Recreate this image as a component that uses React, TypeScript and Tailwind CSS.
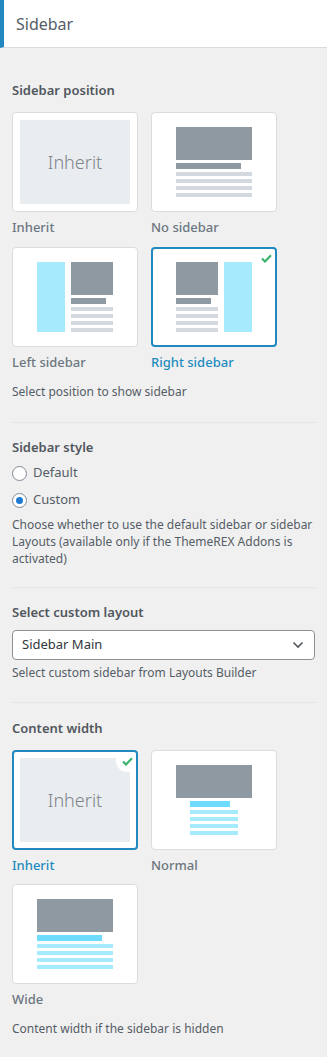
import { ReactNode } from 'react'

const font = { fontFamily: '"Noto Sans", "Open Sans", sans-serif' }

function Check() {
  return (
    <div className="absolute top-[-2px] right-[-2px] w-[22px] h-[22px] rounded-full bg-white flex items-center justify-center">
      <svg width="11" height="9" viewBox="0 0 11 9">
        <path d="M1 4.5 L4 7.5 L10 1.2" fill="none" stroke="#3cb46e" strokeWidth="2.2" />
      </svg>
    </div>
  )
}

interface CardProps {
  label: string
  selected?: boolean
  children: ReactNode
}

function Card({ label, selected, children }: CardProps) {
  return (
    <div className="flex flex-col">
      <div
        className={
          selected
            ? 'relative overflow-hidden w-[126px] h-[100px] bg-white rounded-[4px] border-2 border-[#2288c0] flex items-center justify-center'
            : 'relative overflow-hidden w-[126px] h-[100px] bg-white rounded-[4px] border border-[#dcdcde] flex items-center justify-center'
        }
      >
        {children}
        {selected && <Check />}
      </div>
      <div
        className={
          selected
            ? 'mt-[6px] text-[13px] leading-[18px] font-medium text-[#1e8cbe]'
            : 'mt-[6px] text-[13px] leading-[18px] font-medium text-[#6c7781]'
        }
      >
        {label}
      </div>
    </div>
  )
}

function InheritPreview() {
  return (
    <div className="w-[110px] h-[84px] bg-[#eaedf0] flex items-center justify-center text-[18px] font-light text-[#7d838b]">
      Inherit
    </div>
  )
}

function Lines({ w, color, count = 4 }: { w: number; color: string; count?: number }) {
  return (
    <div className="flex flex-col gap-[3px] mt-[3px]">
      {Array.from({ length: count }).map((_, i) => (
        <div key={i} className="h-[4px]" style={{ width: w, background: color }} />
      ))}
    </div>
  )
}

function NoSidebarPreview() {
  return (
    <div className="w-[76px] h-[70px] flex flex-col">
      <div className="w-[76px] h-[33px] bg-[#8f99a2]" />
      <div className="w-[65px] h-[6px] mt-[3px] bg-[#8f99a2]" />
      <Lines w={76} color="#d3d9de" />
    </div>
  )
}

function SidePreview({ side }: { side: 'left' | 'right' }) {
  const bar = <div className="w-[28px] h-[70px] bg-[#a5eafd]" />
  return (
    <div className="w-[76px] h-[70px] flex gap-[6px]">
      {side === 'left' && bar}
      <div className="flex flex-col w-[42px]">
        <div className="w-[42px] h-[33px] bg-[#8f99a2]" />
        <div className="w-[35px] h-[6px] mt-[3px] bg-[#8f99a2]" />
        <Lines w={42} color="#d3d9de" />
      </div>
      {side === 'right' && bar}
    </div>
  )
}

function WidthPreview({ wide }: { wide?: boolean }) {
  return (
    <div className="w-[76px] h-[70px] flex flex-col items-center">
      <div className="w-[76px] h-[33px] bg-[#8f99a2]" />
      <div className={wide ? 'w-[76px] flex flex-col' : 'w-[48px] flex flex-col'}>
        <div className={wide ? 'w-[65px] h-[6px] mt-[3px] bg-[#6fdcfd]' : 'w-[40px] h-[6px] mt-[3px] bg-[#6fdcfd]'} />
        <Lines w={wide ? 76 : 48} color="#a5eafd" />
      </div>
    </div>
  )
}

function Title({ children }: { children: ReactNode }) {
  return <div className="text-[13px] leading-[20px] font-semibold text-[#50575e]">{children}</div>
}

function Help({ children }: { children: ReactNode }) {
  return <div className="text-[12px] leading-[17px] text-[#555d66]">{children}</div>
}

function Divider() {
  return <div className="border-t border-dotted border-[#dcdcde]" />
}

function Radio({ label, checked }: { label: string; checked?: boolean }) {
  return (
    <div className="flex items-center gap-[6px] h-[18px]">
      <div className="w-[15px] h-[15px] rounded-full border border-[#7e8993] bg-white flex items-center justify-center">
        {checked && <div className="w-[7px] h-[7px] rounded-full bg-[#1e7ad0]" />}
      </div>
      <span className="text-[13px] text-[#555d66]">{label}</span>
    </div>
  )
}

export default function App() {
  return (
    <div className="w-[327px] min-h-[1057px] bg-[#f0f0f0]" style={font}>
      {/* panel header */}
      <div className="h-[48px] bg-white border-b border-[#dcdcde] border-l-4 border-l-[#2288c0] flex items-center pl-[12px]">
        <span className="text-[16px] text-[#555d66]">Sidebar</span>
      </div>

      <div className="px-[12px]">
        {/* Sidebar position */}
        <div className="pt-[32px] pb-[22px]">
          <Title>Sidebar position</Title>
          <div className="grid grid-cols-[126px_126px] gap-x-[13px] gap-y-[11px] mt-[12px]">
            <Card label="Inherit">
              <InheritPreview />
            </Card>
            <Card label="No sidebar">
              <NoSidebarPreview />
            </Card>
            <Card label="Left sidebar">
              <SidePreview side="left" />
            </Card>
            <Card label="Right sidebar" selected>
              <SidePreview side="right" />
            </Card>
          </div>
          <div className="mt-[12px]">
            <Help>Select position to show sidebar</Help>
          </div>
        </div>
        <Divider />

        {/* Sidebar style */}
        <div className="pt-[14px] pb-[20px]">
          <Title>Sidebar style</Title>
          <div className="flex flex-col gap-[9px] mt-[7px]">
            <Radio label="Default" />
            <Radio label="Custom" checked />
          </div>
          <div className="mt-[7px]">
            <Help>
              Choose whether to use the default sidebar or sidebar Layouts (available only if the ThemeREX Addons is
              activated)
            </Help>
          </div>
        </div>
        <Divider />

        {/* Custom layout */}
        <div className="pt-[14px] pb-[21px]">
          <Title>Select custom layout</Title>
          <div className="mt-[8px] h-[30px] bg-white border border-[#8c8f94] rounded-[4px] flex items-center justify-between pl-[9px] pr-[10px]">
            <span className="text-[13px] text-[#32373c]">Sidebar Main</span>
            <svg width="12" height="8" viewBox="0 0 12 8">
              <path d="M1.5 1.5 L6 6 L10.5 1.5" fill="none" stroke="#50575e" strokeWidth="1.6" />
            </svg>
          </div>
          <div className="mt-[4px]">
            <Help>Select custom sidebar from Layouts Builder</Help>
          </div>
        </div>
        <Divider />

        {/* Content width */}
        <div className="pt-[15px] pb-[16px]">
          <Title>Content width</Title>
          <div className="grid grid-cols-[126px_126px] gap-x-[13px] gap-y-[10px] mt-[12px]">
            <Card label="Inherit" selected>
              <InheritPreview />
            </Card>
            <Card label="Normal">
              <WidthPreview />
            </Card>
            <Card label="Wide">
              <WidthPreview wide />
            </Card>
          </div>
          <div className="mt-[12px]">
            <Help>Content width if the sidebar is hidden</Help>
          </div>
        </div>
      </div>
    </div>
  )
}
